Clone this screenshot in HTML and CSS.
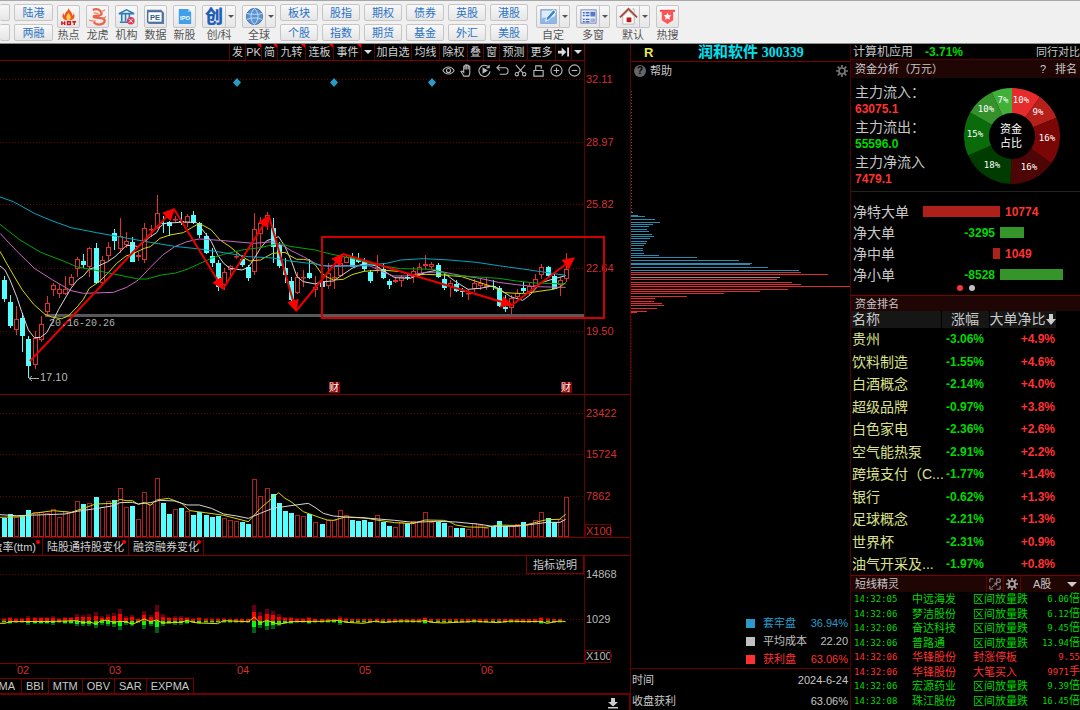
FILE: index.html
```html
<!DOCTYPE html>
<html lang="zh-CN">
<head>
<meta charset="utf-8">
<title>润和软件 300339</title>
<link rel="stylesheet" href="styles.css">
</head>
<body>
<div class="shell">
<header class="toolbar">
  <div class="pair pair-cut"><button aria-label="上一组"></button><button aria-label="下一组"></button></div>
  <div class="pair"><button>陆港</button><button>两融</button></div>
  <div class="tools">
    <div class="tool"><button class="tool-box" aria-labelledby="t1"><svg viewBox="0 0 20 20"><path d="M10 1c1 3 4 4 4 8 2-1 1-2 1-3 3 4 1 8-5 8s-8-4-5-8c0 1 0 2 1 3 0-4 4-5 4-8z" fill="#f0571f"/><path d="M10 6c3 4 3 7 0 8-3-1-3-4 0-8z" fill="#ffd24a"/><path d="M3 15v4M6 15v4M3 17h3M9 15.500h3v3H9zM14 15.500h4M16 15v4" stroke="#d01818" stroke-width="1.500" fill="none"/></svg></button><span id="t1">热点</span></div>
    <div class="tool"><button class="tool-box" aria-labelledby="t2"><svg viewBox="0 0 20 20"><path d="M5 3c5-2 8 0 9 3 1 2-1 3-4 3-4 0-5 1-3 2l8 1c4 1 3 5-1 6-3 1-6 0-8-2" fill="none" stroke="#e8654a" stroke-width="2.400"/><path d="M1 14l7 1M11 7l-5-1M14 5l4-2M16 12l3-2" stroke="#ef8a68" stroke-width="1.400"/></svg></button><span id="t2">龙虎</span></div>
    <div class="tool"><button class="tool-box" aria-labelledby="t3"><svg viewBox="0 0 20 20"><path d="M2 7l8-4 8 4zM3 16h10M5 8v7M9 8v7M13 8v4" fill="none" stroke="#2c7cb8" stroke-width="1.700"/><circle cx="14.500" cy="14.500" r="4" fill="#d93a5a"/><path d="M12.500 12.500l4 4m0-4l-4 4" stroke="#fff"/></svg></button><span id="t3">机构</span></div>
    <div class="tool"><button class="tool-box" aria-labelledby="t4"><svg viewBox="0 0 20 20"><path d="M1 3h15l3 3v12H3l-2-2z" fill="#5a7ca8"/><rect x="2" y="5" width="15" height="11" rx="1" fill="#fff" stroke="#345b8e"/><text x="9.500" y="14" text-anchor="middle" class="pe">PE</text></svg></button><span id="t4">数据</span></div>
    <div class="tool"><button class="tool-box" aria-labelledby="t5"><svg viewBox="0 0 20 20"><path d="M4 2h10l3 3v13H4z" fill="#3f9fe8"/><path d="M14 2v3h3" fill="#b5dcfa"/><text x="10.500" y="14" text-anchor="middle" class="ipo">IPO</text></svg></button><span id="t5">新股</span></div>
    <div class="tool wide"><div class="split"><button class="glyph" aria-labelledby="t6">创</button><button class="drop" aria-label="展开创/科"></button></div><span id="t6">创/科</span></div>
    <div class="tool wide"><div class="split"><button aria-labelledby="t7"><svg viewBox="0 0 20 20"><circle cx="10" cy="10" r="8.500" fill="#5b93d2" stroke="#3b70ae"/><path d="M2 7c5 1 11 1 16 0M2 13c5-2 11-2 16 0M10 1.500c-5 5-5 12 0 17M10 1.500c5 5 5 12 0 17" fill="none" stroke="#c9dff5"/></svg></button><button class="drop" aria-label="展开全球"></button></div><span id="t7">全球</span></div>
  </div>
  <div class="pairs">
    <div class="pair"><button>板块</button><button>个股</button></div>
    <div class="pair"><button>股指</button><button>指数</button></div>
    <div class="pair"><button>期权</button><button>期货</button></div>
    <div class="pair"><button>债券</button><button>基金</button></div>
    <div class="pair"><button>英股</button><button>外汇</button></div>
    <div class="pair"><button>港股</button><button>美股</button></div>
  </div>
  <div class="tools">
    <div class="tool wide"><div class="split"><button aria-labelledby="t8"><svg viewBox="0 0 20 20"><rect x="2" y="3" width="16" height="14" fill="#dcebfb" stroke="#5d86b8"/><path d="M2 13c5-5 6 2 16-4v8H2z" fill="#8db8e8"/><path d="M7 15l1-4 7-8 3 2-7 8z" fill="#3c86d8" stroke="#fff"/></svg></button><button class="drop" aria-label="展开自定"></button></div><span id="t8">自定</span></div>
    <div class="tool wide"><div class="split"><button aria-labelledby="t9"><svg viewBox="0 0 20 20"><rect x="2" y="3" width="16" height="14" fill="#eef2fc" stroke="#7486b8"/><path d="M4 6h2m1 0h4M4 9h2m1 0h4M4 13h2m1 0h4M4 15.500h2m1 0h4" stroke="#4468c0" stroke-width="1.500"/><rect x="12" y="5" width="5" height="5" fill="#5a78c8"/><rect x="12" y="12" width="5" height="4" fill="#9fb0e0"/></svg></button><button class="drop" aria-label="展开多窗"></button></div><span id="t9">多窗</span></div>
    <div class="tool wide"><div class="split"><button aria-labelledby="t10"><svg viewBox="0 0 20 20"><path d="M4 10v8h12v-8l-6-6z" fill="#fff" stroke="#b9b3ac"/><path d="M1 11l9-9 9 9" fill="none" stroke="#a34a3c" stroke-width="2"/><rect x="8" y="11" width="5" height="5" fill="#c01818"/><path d="M14 2h2v4" stroke="#b9b3ac" fill="none"/></svg></button><button class="drop" aria-label="展开默认"></button></div><span id="t10">默认</span></div>
    <div class="tool"><button class="tool-box" aria-labelledby="t11"><svg viewBox="0 0 20 20"><path d="M2 4h16" stroke="#e84848" stroke-width="2"/><path d="M4 4h12v10l-6 4-6-4z" fill="#f55"/><path d="M10 6l1.200 2.500 2.800.3-2 2 .5 2.700-2.500-1.300-2.500 1.300.5-2.700-2-2 2.800-.3z" fill="#fff"/></svg></button><span id="t11">热搜</span></div>
  </div>
</header>

<main class="desk">
<section class="left">
  <nav class="menu">
    <button>发</button><button class="new">PK</button><button class="new">简</button><button class="new w2">九转</button><button class="new w2">连板</button><button class="new w2">事件</button><button class="caret" aria-label="更多事件"></button><button class="w3">加自选</button><button class="w2">均线</button><button class="w2">除权</button><button>叠</button><button>窗</button><button class="w2">预测</button><button class="w2">更多</button><button aria-label="隐藏侧栏"><svg class="i12" viewBox="0 0 12 12"><path d="M0 4.500h4V1l5 5-5 5V7.500H0zM10 1h2v10h-2z" fill="#ddd"/></svg></button><button class="caret" aria-label="侧栏选项"></button>
  </nav>
  <div class="plot">
    <svg id="kline" viewBox="0 61 630 477" role="img" aria-label="K线与成交量"></svg>
    <div class="draw-tools">
      <button aria-label="显示"><svg viewBox="0 0 14 14"><path d="M1 7c3-5 9-5 12 0-3 5-9 5-12 0z"/><circle cx="7" cy="7" r="2.200"/></svg></button>
      <button aria-label="拖动"><svg viewBox="0 0 14 14"><path d="M4 13L1 8c1-1 2 0 3 1V3c0-1 1.500-1 1.500 0v3-4.500c0-1 1.700-1 1.700 0V6 2c0-1 1.700-1 1.700 0v4-3c0-1 1.600-1 1.600 0v7l-1 3z"/></svg></button>
      <button aria-label="播放"><svg viewBox="0 0 14 14"><path d="M12 4a6 6 0 1 0 1 4M12 1v3H9"/><path d="M5.500 4.500v5l4-2.500z" fill="#ccc"/></svg></button>
      <button aria-label="撤销"><svg viewBox="0 0 14 14"><path d="M4 1L1 4l3 3M1 4h9c4 0 4 7 0 7H4"/></svg></button>
      <button aria-label="剪切"><svg viewBox="0 0 14 14"><path d="M2 1l8 9M12 1L4 10"/><circle cx="3" cy="11" r="1.800"/><circle cx="11" cy="11" r="1.800"/></svg></button>
      <button aria-label="锁定"><svg viewBox="0 0 14 14"><path d="M2 7h10v6H2zM4 7V2h6v3"/></svg></button>
      <button aria-label="放大"><svg viewBox="0 0 14 14"><circle cx="7" cy="7" r="6"/><path d="M4 7h6M7 4v6"/></svg></button>
      <button aria-label="缩小"><svg viewBox="0 0 14 14"><circle cx="7" cy="7" r="6"/><path d="M4 7h6"/></svg></button>
    </div>
  </div>
  <nav class="tabs dotted"><button class="cut">盈率(ttm)</button><button>陆股通持股变化</button><button>融资融券变化</button></nav>
  <div class="plot">
    <svg id="flow" viewBox="0 555 630 122" role="img" aria-label="资金指标"></svg>
    <button class="explain">指标说明</button>
  </div>
  <nav class="tabs plain"><button class="cut">DMA</button><button>BBI</button><button>MTM</button><button>OBV</button><button>SAR</button><button>EXPMA</button></nav>
  <footer class="foot"><button aria-label="下载"><svg viewBox="0 0 12 12"><path d="M4 1h4v4h3L6 9.500 1 5h3zM1 10h10v1.500H1z" fill="#ccc"/></svg></button></footer>
</section>

<section class="middle">
  <div class="title"><b class="flag">R</b><h1>润和软件 <span>300339</span></h1></div>
  <div class="help"><a href="#help"><span class="q">?</span>帮助</a><button aria-label="设置"><svg class="gear" viewBox="0 0 14 14"><circle cx="7" cy="7" r="3.500"/><path d="M7 0v3M7 11v3M0 7h3M11 7h3M2 2l2 2M10 10l2 2M12 2l-2 2M4 10l-2 2"/></svg></button></div>
  <svg id="chips" viewBox="631 80 219 302" role="img" aria-label="筹码分布"></svg>
  <dl class="legend">
    <div class="blue"><dt>套牢盘</dt><dd>36.94%</dd></div>
    <div class="grey"><dt>平均成本</dt><dd>22.20</dd></div>
    <div class="red"><dt>获利盘</dt><dd>63.06%</dd></div>
  </dl>
  <dl class="summary">
    <div><dt>时间</dt><dd>2024-6-24</dd></div>
    <div><dt>收盘获利</dt><dd>63.06%</dd></div>
  </dl>
</section>

<aside class="right">
  <div class="sector"><a href="#sector">计算机应用</a><b class="down">-3.71%</b><a class="peer" href="#peer">同行对比</a></div>
  <div class="bar-head"><h2>资金分析（万元）</h2><span>?</span><a href="#rank">排名</a></div>
  <div class="funds">
    <dl>
      <dt>主力流入：</dt><dd class="up">63075.1</dd>
      <dt>主力流出：</dt><dd class="down">55596.0</dd>
      <dt>主力净流入</dt><dd class="up">7479.1</dd>
    </dl>
    <svg id="donut" viewBox="0 0 98 98" role="img" aria-label="资金占比"></svg>
  </div>
  <div class="net" id="net"></div>
  <div class="bar-head rank-head"><h2>资金排名</h2></div>
  <table class="rank">
    <colgroup><col class="c1"><col class="c2"><col class="c3"><col></colgroup>
    <thead><tr><th>名称</th><th>涨幅</th><th><span class="sorted">大单净比<svg viewBox="0 0 10 12"><path d="M3 0h4v5h3L5 11 0 5h3z" fill="#ccc"/></svg></span></th><th class="none"></th></tr></thead>
    <tbody id="rank"></tbody>
  </table>
  <div class="bar-head spirit"><h2>短线精灵</h2>
    <button aria-label="弹出"><svg viewBox="0 0 14 14"><path d="M1 5V1h4M13 9v4H9M1 9v4h4M9 1h4v4H9zM3 11l6-5M6 6h3v3"/></svg></button>
    <button aria-label="设置"><svg class="gear light" viewBox="0 0 14 14"><circle cx="7" cy="7" r="3.500"/><path d="M7 0v3M7 11v3M0 7h3M11 7h3M2 2l2 2M10 10l2 2M12 2l-2 2M4 10l-2 2"/></svg></button>
    <div class="pick"><select aria-label="市场"><option>A股</option></select></div>
  </div>
  <table class="news"><colgroup><col class="n1"><col class="n2"><col class="n3"><col></colgroup><tbody id="news"></tbody></table>
</aside>
</main>
</div>
<script src="app.js"></script>
</body>
</html>
```
FILE: styles.css
```css
* { box-sizing: border-box; }
body { margin: 0; background: #000; color: #c8c8c8; font: 11px/14px "Liberation Sans", "Noto Sans CJK SC", sans-serif; }
button, select { font: inherit; color: inherit; background: none; border: 0; padding: 0; margin: 0; border-radius: 0; }
a { color: inherit; text-decoration: none; }
h1, h2, dl, dd { margin: 0; font-weight: normal; }
svg { display: block; }
.shell { min-height: 100vh; display: flex; flex-direction: column; overflow: hidden; }

.toolbar { height: 44px; display: flex; gap: 4px; background: #f0f0f0; border-top: 1px solid #a8a8a8; border-bottom: 1px solid #8a9090; padding-top: 3px; }
.pair { display: flex; flex-direction: column; gap: 3px; width: 39px; }
.pair button { height: 17px; border: 1px solid #c6c6c6; border-radius: 2px; background: linear-gradient(#f8f8f8, #e6e6e6); color: #2a72c4; line-height: 14px; overflow: hidden; }
.pair-cut { width: 10px; }
.pair-cut button { border-left: 0; }
.pairs { display: flex; gap: 4px; }
.pairs .pair { width: 38px; }
.pairs + .tools { margin-left: 4px; }
.tools { display: flex; gap: 6px; }
.tool { width: 23px; display: flex; flex-direction: column; align-items: center; color: #555; white-space: nowrap; }
.tool.wide { width: 34px; }
.tool > span { line-height: 14px; }
.tool-box, .split { width: 100%; height: 23px; margin-top: 1px; border: 1px solid #c6c6c6; border-radius: 2px; background: linear-gradient(#f8f8f8, #e6e6e6); display: flex; align-items: center; justify-content: center; }
.tool svg { width: 19px; height: 19px; }
.split button:first-child { width: 22px; height: 21px; display: flex; align-items: center; justify-content: center; }
.split .glyph { color: #1f5fb8; font-size: 18px; font-weight: 900; }
.drop { width: 10px; height: 21px; border-left: 1px solid #c6c6c6; display: flex; align-items: center; justify-content: center; }
.drop::before, .caret::before { content: ""; border: 3px solid transparent; border-top-color: #555; border-bottom: 0; }
.pe { fill: #345b8e; }
.ipo { fill: #fff; }

.desk { flex: 1; display: grid; grid-template-columns: minmax(0, 630fr) minmax(0, 221fr) minmax(0, 229fr); }
.left, .middle, .right { display: flex; flex-direction: column; min-width: 0; }

.menu { height: 17px; margin-right: 45px; display: flex; justify-content: flex-end; border-bottom: 1px solid #800000; border-right: 1px solid #800000; }
.menu button { width: 16px; flex-shrink: 0; border-left: 1px solid #600000; position: relative; display: flex; align-items: center; justify-content: center; white-space: nowrap; color: #d0d0d0; }
.menu .w2 { width: 28px; }
.menu .w3 { width: 37px; }
.menu .caret { width: 13px; }
.menu .caret::before { border-width: 4px 4px 0; border-top-color: #ddd; }
.menu .new::after { content: ""; position: absolute; top: 0; right: 0; border: 2px solid #f00; border-left-color: transparent; border-bottom-color: transparent; }
.i12 { width: 11px; height: 12px; }
.plot { position: relative; }
.plot > svg { width: 100%; height: auto; }
.draw-tools { position: absolute; top: 3px; right: 48px; display: flex; gap: 4px; }
.draw-tools button { width: 14px; }
.draw-tools svg { width: 13px; height: 13px; fill: none; stroke: #b8b8b8; stroke-width: 1.2; }

.tabs { display: flex; white-space: nowrap; }
.tabs button { border-right: 1px solid #700000; position: relative; }
.dotted { height: 18px; border-bottom: 1px solid #800000; }
.dotted button { width: 86px; color: #d0d0d0; }
.dotted button:last-child { width: 75px; }
.tabs .cut { width: 43px; overflow: hidden; display: flex; justify-content: flex-end; align-items: center; padding-right: 6px; }
.dotted button::after { content: ""; position: absolute; top: 2px; right: 2px; width: 4px; height: 4px; border-radius: 50%; background: #f00; }
.explain { position: absolute; top: 0; right: 46px; width: 58px; height: 18px; border: 1px solid #800000; border-top: 0; }
.plain { height: 17px; border-bottom: 2px solid #700000; }
.plain button { padding: 0 4px; border-top: 1px solid #700000; }
.plain .cut { width: 22px; }
.foot { flex: 1; min-height: 16px; border-right: 1px solid #700000; display: flex; justify-content: flex-end; align-items: center; padding-right: 10px; }
.foot svg { width: 12px; height: 12px; }

svg text { font: 11px "Liberation Sans", "Noto Sans CJK SC", sans-serif; }
svg .mono { font: 10px "Liberation Mono", monospace; fill: #b0b0b0; }
svg .badge { font-size: 10px; fill: #fff; }
svg text.pe { font: bold 8px "Liberation Sans", sans-serif; }
svg text.ipo { font: bold 6px "Liberation Sans", sans-serif; }
.axis-red { fill: #d03030; }
.axis-grey { fill: #b8b8b8; }

.middle { border-left: 1px solid #600000; border-right: 1px solid #500000; }
.title { height: 18px; border-bottom: 1px solid #800000; display: flex; align-items: center; padding-left: 13px; }
.flag { color: #e8e860; font-size: 13px; width: 54px; }
.title h1 { color: #00e0f0; font: bold 15px/16px "Liberation Serif", "Noto Sans CJK SC", serif; white-space: nowrap; }
.title h1 span { font-size: 14px; }
.help { height: 18px; display: flex; justify-content: space-between; align-items: center; padding: 0 2px 0 3px; }
.help a { display: flex; align-items: center; gap: 4px; }
.q { width: 12px; height: 12px; border-radius: 50%; background: #666; color: #000; font-weight: bold; font-size: 10px; line-height: 12px; text-align: center; }
.gear { width: 12px; height: 12px; fill: none; stroke: #777; stroke-width: 2; }
.gear.light { stroke: #aaa; }
.middle > svg { width: 100%; height: auto; }
.legend { margin-top: auto; border-bottom: 1px solid #600000; }
.legend div, .summary div { display: flex; justify-content: space-between; align-items: center; padding-right: 2px; }
.legend div { height: 18px; padding-left: 115px; }
.legend dt { display: flex; align-items: center; gap: 8px; }
.legend dt::before { content: ""; width: 9px; height: 9px; background: currentColor; }
.blue { color: #2a9bc8; }
.grey { color: #c0c0c0; }
.red { color: #ff3030; }
.summary div { height: 21px; padding-left: 1px; }

.up { color: #ff3232; }
.down { color: #00d800; }
.sector { height: 16px; border-bottom: 1px solid #500000; display: flex; align-items: center; padding-left: 2px; font-size: 12px; white-space: nowrap; }
.sector b { margin-left: 12px; }
.sector .peer { margin-left: auto; font-size: 11px; }
.bar-head { height: 18px; background: #200505; display: flex; align-items: center; padding: 0 3px 0 4px; gap: 9px; }
.bar-head h2 { font-size: 11px; margin-right: auto; }
.funds { height: 114px; border-bottom: 1px solid #222; display: flex; justify-content: space-between; padding: 5px 19px 0 4px; }
.funds dt { font-size: 14px; line-height: 18px; white-space: nowrap; }
.funds dd { font-weight: bold; font-size: 12px; line-height: 17px; }
.funds svg { width: 98px; height: 98px; margin-top: 4px; overflow: visible; }
#donut .pct { font: 9px "DejaVu Sans Mono", monospace; fill: #fff; text-anchor: middle; }
#donut .mid { fill: #fff; text-anchor: middle; }
.net { height: 103px; padding: 9px 0 0 2px; }
.net-row { display: grid; grid-template-columns: 70px 77px 1fr; height: 21px; align-items: center; font-size: 12px; font-weight: bold; }
.net-row span:first-child { font-size: 14px; font-weight: normal; white-space: nowrap; }
.net-side { display: flex; align-items: center; }
.net-side.neg { justify-content: flex-end; }
.net-side b { padding: 0 5px; }
.net-bar { height: 11px; background: #b0201a; }
.net-bar.out { background: #35952b; }
.pager { display: flex; gap: 6px; padding-left: 104px; }
.pager button { width: 6px; height: 6px; border-radius: 50%; background: #c0c0c0; }
.pager .on { background: #ff3232; }
.rank-head { height: 16px; border-top: 1px solid #800000; }
table { border-collapse: collapse; table-layout: fixed; width: 100%; }
th, td { padding: 0; white-space: nowrap; }
.c1 { width: 90px; }
.c2 { width: 48px; }
.c3 { width: 67px; }
.rank th { height: 17px; background: #161616; font-weight: normal; font-size: 14px; line-height: 17px; border-right: 1px solid #000; }
.rank th:first-child { text-align: left; padding-left: 1px; }
.rank th.none { background: none; }
.sorted { display: flex; align-items: center; justify-content: center; }
.sorted svg { width: 10px; height: 12px; }
.rank td { height: 22px; font-weight: bold; font-size: 12px; line-height: 22px; text-align: right; }
.rank tr:nth-child(even) td { height: 23px; }
.rank td:first-child { text-align: left; padding-left: 1px; font-size: 14px; font-weight: normal; color: #dce08c; }
.rank td:nth-child(2) { padding-right: 5px; }
.rank td:nth-child(3) { padding-right: 1px; }
.spirit { height: 17px; border-top: 1px solid #800000; padding-right: 0; gap: 0; }
.spirit button { width: 17px; height: 16px; border-left: 1px solid #600000; display: flex; align-items: center; justify-content: center; }
.spirit button svg { width: 12px; height: 12px; fill: none; stroke: #aaa; }
.spirit .gear { stroke-width: 2; }
.pick { position: relative; width: 60px; border-left: 1px solid #600000; height: 16px; }
.pick select { appearance: none; width: 100%; height: 16px; padding-left: 12px; }
.pick::after { content: ""; position: absolute; right: 3px; top: 6px; border: 5px solid transparent; border-top-color: #ccc; border-bottom: 0; }
.n1 { width: 61px; }
.n2 { width: 61px; }
.n3 { width: 62px; }
.news td { height: 14px; line-height: 14px; }
.news tr:nth-child(even) td { height: 15px; }
.news td:first-child { padding-left: 3px; }
.news td:first-child, .news td:last-child { font-family: "DejaVu Sans Mono", "Noto Sans CJK SC", monospace; font-size: 9px; }
.news td:last-child { text-align: right; }
.news small { font-size: 11px; line-height: 12px; }
```
FILE: app.js
```js
const el = id => document.getElementById(id);

// [falling, high, body top, body bottom, low, volume height]
const candles = [
[1,276,280,299,302,19],[1,295,302,326,328,23],[0,306,319,330,335,20],[1,313,318,336,352,22],[1,336,339,366,378,27],
[0,331,338,365,369,25],[0,316,324,340,342,25],[0,296,303,312,317,24],[0,283,285,290,296,28],[0,284,289,294,298,20],
[0,276,289,294,295,26],[0,274,277,285,286,25],[0,257,259,269,277,36],[1,254,261,265,268,33],[0,247,248,267,277,34],
[1,243,248,283,284,40],[0,256,260,283,284,30],[0,242,247,256,261,36],[1,229,233,241,250,37],[0,218,236,249,253,49],
[0,232,241,245,248,30],[1,237,242,262,262,31],[0,252,255,257,261,18],[0,223,228,260,263,45],[0,225,229,230,237,33],
[0,195,213,228,229,59],[1,216,223,224,233,34],[1,221,222,226,236,23],[0,216,219,220,223,28],[1,212,221,222,225,29],
[0,214,216,223,227,26],[1,211,215,223,224,22],[1,222,223,235,238,25],[1,233,236,253,254,22],[1,248,256,263,267,20],
[1,260,263,287,291,21],[0,268,272,285,290,19],[0,265,266,270,277,17],[0,252,256,257,259,16],[1,255,259,265,267,15],
[1,265,267,278,281,13],[0,213,229,272,275,58],[0,217,223,234,247,41],[0,212,215,220,230,49],[1,218,228,247,263,43],
[1,242,245,266,268,34],[1,258,268,275,283,26],[1,277,281,300,301,24],[0,272,277,293,294,22],[0,270,277,278,287,21],
[1,259,273,278,279,23],[0,276,287,290,297,15],[1,273,282,287,288,13],[0,263,273,286,289,17],[0,265,277,278,289,17],
[0,260,263,276,277,27],[0,255,257,263,263,22],[1,253,257,267,267,17],[1,253,259,262,263,16],[1,258,260,269,271,17],
[1,270,272,281,283,15],[0,255,267,268,273,22],[1,263,269,278,279,15],[1,279,281,285,289,11],[0,277,280,282,283,10],
[0,275,277,281,287,15],[1,274,277,278,280,14],[0,267,271,277,283,16],[0,263,267,275,277,16],[0,255,264,266,269,25],
[0,262,264,267,269,15],[1,263,265,277,278,15],[1,273,279,288,290,14],[0,280,283,287,297,11],[1,280,284,291,292,9],
[1,288,291,292,297,9],[0,290,293,294,300,8],[0,279,283,289,292,14],[0,279,283,286,290,12],[0,278,285,287,290,9],
[1,280,286,287,290,11],[1,286,288,306,307,16],[1,295,307,309,312,11],[0,295,298,308,314,11],[0,289,293,297,298,13],
[1,282,288,291,293,15],[0,283,286,292,295,13],[0,274,279,286,288,17],[0,264,267,275,279,25],[1,266,267,276,277,19],
[1,274,276,289,289,15],[0,277,280,285,296,18],[0,253,269,279,282,40]];
const cx = i => Math.round(4 + i * 6.107);

// Curves are stored on a grid three times finer than the view
const curve = (color, pts, top) => `<polyline transform="translate(0 ${top}) scale(.33333)" fill="none" stroke="${color}" stroke-width="3" points="${pts}"/>`;
const dots = (y, c = '#700000') => `<path d="M0 ${y}.5H584" stroke="${c}" stroke-dasharray="1 2"/>`;
const label = (y, t, cls) => `<text x="586" y="${y + 4}" class="${cls}">${t}</text>`;

let k = '';
for (const [y, t] of [[79,'32.11'],[142,'28.97'],[204,'25.82'],[268,'22.64'],[331,'19.50'],[413,'23422'],[454,'15724'],[496,'7862']])
  k += dots(y) + label(y, t, 'axis-red');
k += '<path d="M0 394.5H630M0 537.5H630" stroke="#800000"/><path d="M584.5 61V538" stroke="#600000"/><rect x="585.5" y="524.5" width="25" height="13" fill="none" stroke="#700000"/>' + label(531, 'X100', 'axis-red');
k += '<path d="M45 315.500H584" stroke="#585858" stroke-width="3"/>';
candles.forEach(([f, h, t, b, l, v], i) => {
  const x = cx(i), s = f ? '#54ffff' : '#e03030', bh = Math.max(1, b - t);
  k += `<path d="M${x + .5} ${h}V${t}M${x + .5} ${b}V${l}" stroke="${s}"/>`;
  if (f) k += `<rect x="${x - 2}" y="${t}" width="5" height="${bh}" fill="${s}"/><rect x="${x - 2}" y="${537 - v}" width="5" height="${v}" fill="${s}"/>`;
  else k += `<rect x="${x - 1.5}" y="${t + .5}" width="4" height="${Math.max(.5, bh - 1)}" fill="#000" stroke="${s}"/><rect x="${x - 1.5}" y="${537.5 - v}" width="4" height="${v - 1}" fill="#000" stroke="#b02020"/>`;
});
k += curve('#d8d8d8', '0,258 15,270 30,300 50,350 65,395 85,450 103,473 122,472 140,458 158,425 176,388 213,325 232,300 250,288 268,267 287,262 323,245 345,230 360,216 378,197 397,196 415,200 433,185 451,170 470,158 480,140 495,130 524,128 561,126 590,128 616,160 634,185 653,225 671,250 690,265 726,270 745,262 763,235 781,205 800,182 836,170 855,200 873,240 891,290 910,305 946,312 964,305 1001,303 1019,290 1056,265 1092,250 1129,258 1147,270 1184,293 1230,295 1275,278 1312,270 1330,278 1367,305 1404,328 1440,325 1477,318 1495,325 1532,350 1568,361 1590,345 1623,308 1660,297 1697,287', 180);
k += curve('#d8d800', '0,214 20,250 49,300 67,330 100,372 135,403 158,412 185,416 205,408 232,380 250,358 268,325 300,303 323,280 350,250 378,228 397,222 433,205 451,200 480,175 510,165 550,158 575,143 598,130 634,150 660,180 690,200 726,230 750,243 781,240 818,220 855,217 870,227 890,238 910,238 928,241 946,255 964,280 983,292 1001,300 1030,298 1056,284 1092,274 1147,270 1202,275 1239,286 1275,283 1330,285 1385,290 1422,302 1477,320 1513,338 1570,341 1623,333 1660,328 1678,322 1697,308', 180);
k += curve('#c868c8', '0,160 49,212 103,265 158,300 213,332 250,340 340,337 380,322 415,300 451,262 488,225 524,200 561,185 598,177 660,181 726,187 763,190 818,185 855,200 870,210 910,230 946,250 964,258 1019,256 1110,258 1147,275 1180,288 1220,288 1275,277 1330,276 1385,287 1440,295 1495,307 1550,314 1605,320 1697,322', 180);
k += curve('#00a800', '0,133 60,180 122,217 195,245 232,261 287,271 341,282 415,297 440,297 488,284 524,280 561,268 634,235 671,223 726,210 781,203 836,190 870,199 946,210 983,220 1056,235 1130,255 1202,266 1300,268 1349,285 1422,290 1495,295 1550,303 1605,309 1697,312', 180);
k += curve('#00a8c0', '0,51 40,65 103,100 150,120 213,143 290,158 378,174 451,187 524,199 598,207 671,218 745,230 818,234 870,243 946,252 990,260 1070,258 1160,250 1202,240 1270,236 1349,240 1430,247 1495,257 1568,267 1623,275 1697,286', 180);
k += curve('#d8d800', '0,382 67,380 100,370 160,362 213,367 250,355 287,342 341,340 360,328 378,332 397,332 415,343 433,337 451,346 470,330 506,325 545,340 570,362 616,368 671,376 745,395 781,355 836,308 855,325 873,335 910,365 960,383 982,390 1000,391 1037,381 1092,383 1129,390 1184,398 1239,401 1275,390 1330,391 1348,395 1367,405 1404,411 1458,412 1495,405 1568,407 1605,398 1623,393 1641,389 1678,388 1697,373', 390);
k += curve('#d8d8d8', '0,374 49,377 140,374 195,372 232,364 287,356 341,347 360,338 397,337 415,342 451,338 480,331 524,333 561,345 598,345 634,355 671,372 710,378 745,385 781,370 818,355 873,347 925,340 945,352 970,370 1000,378 1037,381 1110,385 1184,391 1239,397 1312,394 1367,396 1440,403 1477,409 1550,409 1605,402 1641,397 1680,397 1697,388', 390);
k += '<defs><marker id="tip" markerUnits="userSpaceOnUse" markerWidth="13" markerHeight="12" refX="11" refY="6" orient="auto"><path d="M0 0L12 6L0 12z" fill="#f00"/></marker></defs>';
const turns = [[30,361],[174,209],[223,289],[269,216],[296,311],[343,254],[512,305],[574,258]];
for (let i = 1; i < turns.length; i++)
  k += `<path d="M${turns[i - 1]}L${turns[i]}" stroke="#e80000" stroke-width="2" marker-end="url(#tip)"/>`;
k += '<rect x="322" y="237" width="282" height="81" fill="none" stroke="#d00000" stroke-width="2"/>';
k += '<text x="49" y="326" class="mono">20.16-20.26</text><path d="M29 378.500H39M32 376l-3 2.500 3 2.500" stroke="#b0b0b0" fill="none"/><text x="40" y="381" class="axis-grey">17.10</text>';
for (const x of [237, 334, 432]) k += `<path d="M${x} 78l4 4.500-4 4.500-4-4.500z" fill="#2a9bc8"/>`;
for (const x of [329, 561]) k += `<rect x="${x}" y="382" width="11" height="11" fill="#900000"/><text x="${x}" y="391" class="badge">财</text>`;
el('kline').innerHTML = k;

let f = dots(573) + dots(618) + label(573, '14868', 'axis-grey') + label(618, '1029', 'axis-grey') + label(655, 'X100', 'axis-grey');
f += '<rect x="585.5" y="649.5" width="25" height="12" fill="none" stroke="#700000"/><path d="M0 662.500H584" stroke="#800000"/><path d="M584.500 555V663" stroke="#600000"/>';
candles.slice(0, -1).forEach((c, i) => {
  const u = Math.max(2, Math.round(Math.pow(c[5] / 59, 1.6) * 16)), d = Math.max(2, Math.round(u * .75)), x = cx(i) - 2;
  const ui = Math.ceil(u * .55), di = Math.ceil(d * .5);
  f += `<rect x="${x}" y="${620 - u}" width="4" height="${u}" fill="#600010"/><rect x="${x}" y="${620 - ui}" width="4" height="${ui}" fill="#f00"/><rect x="${x}" y="620" width="4" height="${d}" fill="#006018"/><rect x="${x}" y="620" width="4" height="${di}" fill="#0f0"/>`;
});
f += curve('#e0e000', '0,187 15,187 30,182 170,181 230,179 250,185 268,182 287,189 305,178 323,178 341,184 360,181 378,182 397,190 415,182 433,174 451,182 470,177 488,186 543,184 561,178 580,184 598,186 653,188 671,179 745,182 763,168 781,186 800,178 836,190 873,182 940,181 964,181 1019,178 1037,184 1090,187 1129,180 1147,185 1202,180 1260,181 1275,178 1294,184 1330,186 1410,182 1422,179 1440,182 1495,185 1530,180 1580,182 1623,181 1641,187 1678,180 1697,182', 560);
for (const [x, t] of [[16,'02'],[108,'03'],[236,'04'],[358,'05'],[480,'06']])
  f += `<path d="M${x}.5 662v3" stroke="#800000"/><text x="${x + 1}" y="673" class="axis-red">${t}</text>`;
el('flow').innerHTML = f;

// Holdings by price level: [y, length]
const above = [[212,2],[215,7],[216,14],[219,24],[222,29],[224,22],[226,18],[229,16],[231,18],[234,21],[236,23],[238,19],[241,16],[243,15],[245,13],[248,12],[250,12],[253,13],[255,28],[257,66],[260,108],[263,121],[264,119],[267,137],[270,168]];
const below = [[272,170],[274,197],[279,146],[282,161],[284,170],[286,220],[289,157],[291,129],[293,93],[296,56],[298,24],[301,23],[303,31],[305,33],[308,26],[311,16],[312,6]];
const level = c => ([y, w]) => `<rect x="631" y="${y}" width="${w}" height="1" fill="${c}"/>`;
el('chips').innerHTML = '<path d="M631.500 91V212" stroke="#555" stroke-dasharray="1 2"/><path d="M631.500 313V380" stroke="#600000" stroke-dasharray="1 2"/>' + above.map(level('#2a8bb0')).join('') + below.map(level('#e02c2c')).join('') + level('#909088')([277, 149]);

const slices = [[10,'#e52b2b',58,13],[9,'#b5201b',75,25],[16,'#7a0606',84,51],[16,'#4d0505',66,80],[18,'#003c00',29,78],[15,'#0a6b0a',12,47],[10,'#35912b',23,22],[7,'#40b038',40,13]];
let at = -Math.PI / 2, d = '', txt = '';
for (const [n, c, x, y] of slices) {
  const to = at + n / 101 * 2 * Math.PI, p = (r, a) => `${(49 + r * Math.cos(a)).toFixed(2)} ${(49 + r * Math.sin(a)).toFixed(2)}`;
  d += `<path fill="${c}" d="M${p(48, at)}A48 48 0 0 1 ${p(48, to)}L${p(23, to)}A23 23 0 0 0 ${p(23, at)}z"/>`;
  txt += `<text class="pct" x="${x}" y="${y + 3}">${n}%</text>`;
  at = to;
}
el('donut').innerHTML = d + txt + '<text class="mid" x="48" y="46">资金</text><text class="mid" x="48" y="60">占比</text>';

el('net').innerHTML = [['净特大单',10774,77],['净大单',-3295,24],['净中单',1049,7],['净小单',-8528,63]].map(([n, v, w]) => {
  const bar = `<i class="net-bar ${v < 0 ? 'out' : ''}" style="width:${w}px"></i>`, num = `<b class="${v < 0 ? 'down' : 'up'}">${v}</b>`;
  return `<div class="net-row"><span>${n}</span><div class="net-side neg">${v < 0 ? num : bar}</div><div class="net-side">${v < 0 ? bar : num}</div></div>`;
}).join('') + '<div class="pager"><button class="on" aria-label="第1页"></button><button aria-label="第2页"></button></div>';

el('rank').innerHTML = [['贵州','-3.06','4.9'],['饮料制造','-1.55','4.6'],['白酒概念','-2.14','4.0'],['超级品牌','-0.97','3.8'],['白色家电','-2.36','2.6'],['空气能热泵','-2.91','2.2'],['跨境支付（C...','-1.77','1.4'],['银行','-0.62','1.3'],['足球概念','-2.21','1.3'],['世界杯','-2.31','0.9'],['油气开采及...','-1.97','0.8']]
  .map(([n, a, b]) => `<tr><td>${n}</td><td class="down">${a}%</td><td class="up">+${b}%</td><td></td></tr>`).join('');

el('news').innerHTML = [['05','中远海发','区间放量跌','6.06','倍'],['06','梦洁股份','区间放量跌','6.12','倍'],['06','奋达科技','区间放量跌','9.45','倍'],['06','普路通','区间放量跌','13.94','倍'],['06','华锋股份','封涨停板','9.55',''],['06','华锋股份','大笔买入','9971','手'],['06','宏源药业','区间放量跌','9.39','倍'],['08','珠江股份','区间放量跌','16.45','倍']]
  .map(([s, n, e, v, u]) => `<tr class="${e === '区间放量跌' ? 'down' : 'up'}"><td>14:32:${s}</td><td>${n}</td><td>${e}</td><td>${v}<small>${u}</small></td></tr>`).join('');
```
